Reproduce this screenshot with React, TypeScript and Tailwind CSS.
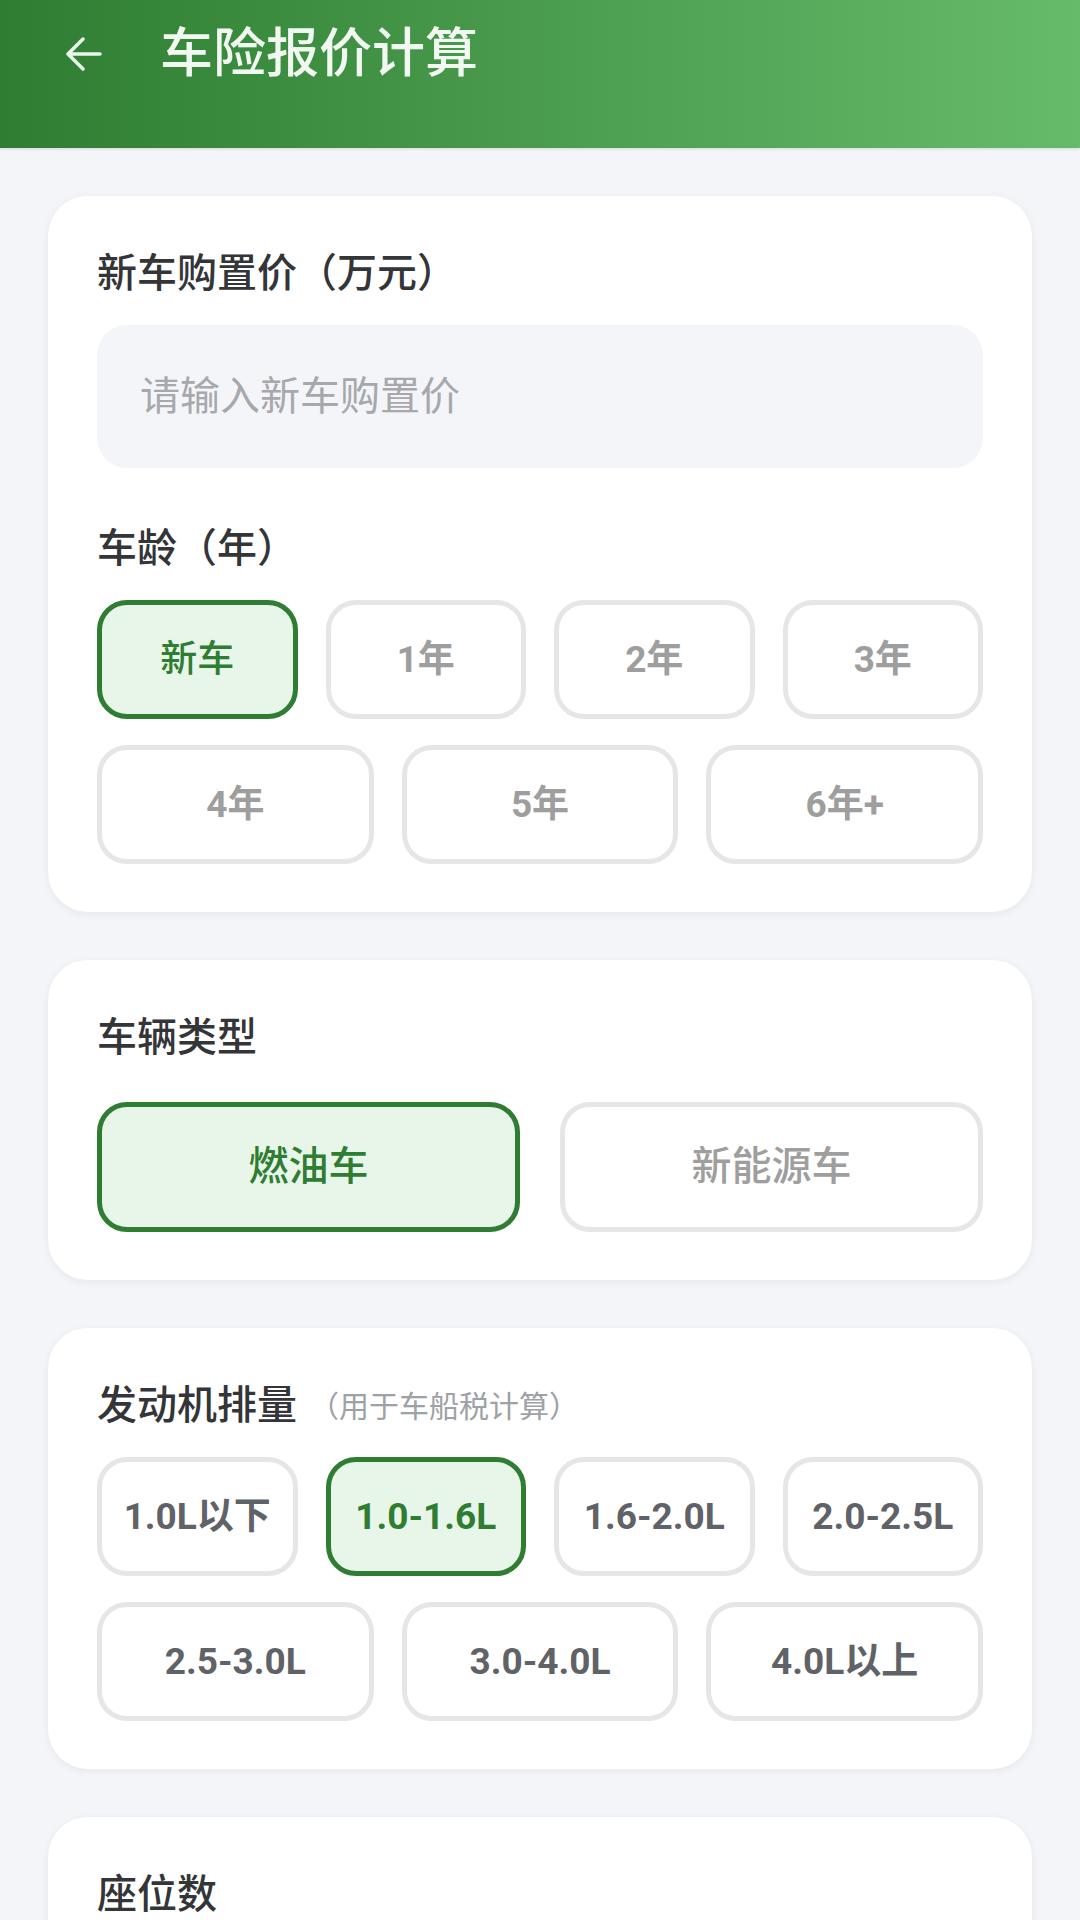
import { useState } from "react";

const AGES = [["新车", "1年", "2年", "3年"], ["4年", "5年", "6年+"]];
const ENGINES = [
  ["1.0L以下", "1.0-1.6L", "1.6-2.0L", "2.0-2.5L"],
  ["2.5-3.0L", "3.0-4.0L", "4.0L以上"],
];

function Chip({
  label,
  active,
  muted,
  onClick,
  tall,
}: {
  label: string;
  active: boolean;
  muted?: boolean;
  onClick: () => void;
  tall?: boolean;
}) {
  // plain CJK labels render lighter than the numeric ones
  const hasDigits = /\d/.test(label);
  return (
    <button
      type="button"
      onClick={onClick}
      className={`flex items-center justify-center rounded-[30px] border-[5px] ${
        hasDigits ? "font-bold" : "font-medium"
      } ${tall ? "h-[130px] text-[40px]" : "h-[119px] text-[37px]"} ${
        active
          ? "border-[#2e7d32] bg-[#e8f5e9] text-[#2e7d32]"
          : muted
            ? "border-[#e6e6e6] bg-white text-[#9e9e9e]"
            : "border-[#e6e6e6] bg-white text-[#5f6266]"
      }`}
    >
      {label}
    </button>
  );
}

function ChipRows({
  rows,
  value,
  onChange,
  muted,
}: {
  rows: string[][];
  value: string;
  onChange: (v: string) => void;
  muted?: boolean;
}) {
  return (
    <div className="mt-[21px] flex flex-col gap-[26px]">
      {rows.map((row, i) => (
        <div
          key={i}
          className={`grid gap-x-[28px] ${row.length === 4 ? "grid-cols-4" : "grid-cols-3"}`}
        >
          {row.map((item) => (
            <Chip
              key={item}
              label={item}
              active={item === value}
              muted={muted}
              onClick={() => onChange(item)}
            />
          ))}
        </div>
      ))}
    </div>
  );
}

function Card({ children }: { children: React.ReactNode }) {
  return (
    <section className="rounded-[40px] bg-white px-[49px] pt-12 pb-12 shadow-[0_2px_8px_rgba(0,0,0,0.06)]">
      {children}
    </section>
  );
}

function Label({ children }: { children: React.ReactNode }) {
  return (
    <h3 className="text-[40px] leading-[60px] font-medium text-[#333538]">
      {children}
    </h3>
  );
}

export default function App() {
  const [age, setAge] = useState("新车");
  const [fuel, setFuel] = useState("燃油车");
  const [engine, setEngine] = useState("1.0-1.6L");
  const [price, setPrice] = useState("");

  return (
    <div
      className="h-[1920px] overflow-hidden bg-[#f3f5f8]"
      style={{ fontFamily: '"Roboto", "Noto Sans CJK SC", sans-serif' }}
    >
      {/* ── Top bar ─────────────────────────────── */}
      <header className="h-[148px] bg-gradient-to-r from-[#2e7d32] to-[#66bb6a] shadow-[0_1px_3px_rgba(0,0,0,0.12)]">
        <div className="flex h-[108px] items-center pl-[66px]">
          <svg
            width="36"
            height="36"
            viewBox="0 0 36 36"
            fill="none"
            stroke="#ecf7ec"
            strokeWidth="3.5"
            strokeLinecap="round"
            strokeLinejoin="round"
          >
            <path d="M34 18H3M17 3 2 18l15 15" />
          </svg>
          <h1 className="ml-[58px] text-[53px] leading-none font-medium text-[#f1f8f1]">
            车险报价计算
          </h1>
        </div>
      </header>

      <main className="flex flex-col gap-12 px-12 pt-12">
        {/* ── Price ───────────────────────────── */}
        <Card>
          <Label>新车购置价（万元）</Label>
          <input
            value={price}
            onChange={(e) => setPrice(e.target.value)}
            placeholder="请输入新车购置价"
            className="mt-[21px] h-[143px] w-full rounded-[30px] bg-[#f3f5f8] pl-[43px] text-[40px] text-[#333] outline-none placeholder:text-[#a6a8ab]"
          />
          <div className="mt-[51px]">
            <Label>车龄（年）</Label>
          </div>
          <ChipRows rows={AGES} value={age} onChange={setAge} muted />
        </Card>

        {/* ── Vehicle type ────────────────────── */}
        <Card>
          <Label>车辆类型</Label>
          <div className="mt-[34px] grid grid-cols-2 gap-x-[40px]">
            {["燃油车", "新能源车"].map((t) => (
              <Chip
                key={t}
                label={t}
                tall
                muted
                active={t === fuel}
                onClick={() => setFuel(t)}
              />
            ))}
          </div>
        </Card>

        {/* ── Engine ──────────────────────────── */}
        <Card>
          <div className="flex items-center">
            <Label>发动机排量</Label>
            <span className="ml-[12px] text-[30px] text-[#9ea1a5]">
              （用于车船税计算）
            </span>
          </div>
          <ChipRows rows={ENGINES} value={engine} onChange={setEngine} />
        </Card>

        {/* ── Seats ───────────────────────────── */}
        <Card>
          <Label>座位数</Label>
          <div className="h-[300px]" />
        </Card>
      </main>
    </div>
  );
}
